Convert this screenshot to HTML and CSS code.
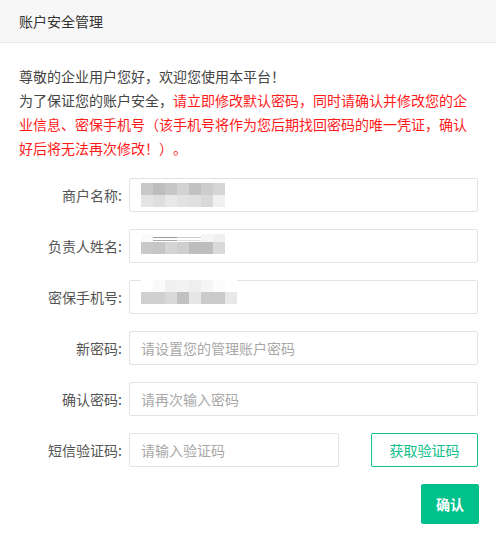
FILE: index.html
```html
<!DOCTYPE html>
<html lang="zh-CN">
<head>
<meta charset="utf-8">
<title>账户安全管理</title>
<link rel="stylesheet" href="styles.css">
</head>
<body>
<div class="panel">
  <div class="panel-header">账户安全管理</div>
  <div class="panel-body">
    <div class="intro">
      <p>尊敬的企业用户您好，欢迎您使用本平台！</p>
      <p>为了保证您的账户安全，<span class="warn">请立即修改默认密码，同时请确认并修改您的企业信息、密保手机号（该手机号将作为您后期找回密码的唯一凭证，确认好后将无法再次修改！）。</span></p>
    </div>
    <div class="form">
      <div class="row">
        <label class="label">商户名称:</label>
        <div class="field masked">
          <div class="mosaic">
            <div class="mrow">
              <i class="g200"></i><i class="g189"></i><i class="g198"></i><i class="g210"></i><i class="g193"></i><i class="g205"></i><i class="g214"></i>
            </div>
            <div class="mrow">
              <i class="g228"></i><i class="g222"></i><i class="g232"></i><i class="g226"></i><i class="g223"></i><i class="g216"></i><i class="g240"></i>
            </div>
          </div>
        </div>
      </div>
      <div class="row">
        <label class="label">负责人姓名:</label>
        <div class="field masked">
          <div class="mosaic shift">
            <div class="mrow frag">
              <i class="g250"></i><i class="dk"></i><i class="dk"></i><i class="dk2"></i><i class="dk2"></i><i class="g245"></i><i class="g240"></i>
            </div>
            <div class="mrow">
              <i class="g201"></i><i class="g198"></i><i class="g212"></i><i class="g207"></i><i class="g189"></i><i class="g189"></i><i class="g217"></i>
            </div>
          </div>
        </div>
      </div>
      <div class="row">
        <label class="label">密保手机号:</label>
        <div class="field masked">
          <div class="mosaic shift2">
            <div class="mrow">
              <i class="g255"></i><i class="g250"></i><i class="g240"></i><i class="g242"></i><i class="g238"></i><i class="g245"></i><i class="g252"></i><i class="g255"></i>
            </div>
            <div class="mrow">
              <i class="g208"></i><i class="g208"></i><i class="g217"></i><i class="g193"></i><i class="g230"></i><i class="g202"></i><i class="g202"></i><i class="g232"></i>
            </div>
          </div>
        </div>
      </div>
      <div class="row">
        <label class="label" for="pwd">新密码:</label>
        <input class="field" id="pwd" type="text" placeholder="请设置您的管理账户密码">
      </div>
      <div class="row">
        <label class="label" for="pwd2">确认密码:</label>
        <input class="field" id="pwd2" type="text" placeholder="请再次输入密码">
      </div>
      <div class="row">
        <label class="label" for="sms">短信验证码:</label>
        <input class="field short" id="sms" type="text" placeholder="请输入验证码">
        <button class="btn-outline" type="button">获取验证码</button>
      </div>
      <div class="actions">
        <button class="btn-primary" type="button">确认</button>
      </div>
    </div>
  </div>
</div>
</body>
</html>
```

FILE: styles.css
```css
* { box-sizing: border-box; }
html, body { margin: 0; padding: 0; background: #fff; }
body {
  font-family: "Noto Sans CJK SC", "Noto Sans", sans-serif;
  font-size: 14px;
  color: #444;
  text-spacing-trim: space-all;
}
.panel { width: 496px; }
.panel-header {
  height: 43px;
  line-height: 42px;
  padding-left: 19px;
  background: #f7f7f7;
  border-bottom: 1px solid #ebebeb;
  color: #333;
  font-size: 14px;
}
.panel-body { padding: 21px 18px 0 19px; }
.intro p { margin: 0; line-height: 24px; color: #444; }
.intro .warn { color: #ff1a1a; }
.form {
  margin-top: 18px;
  display: flex;
  flex-direction: column;
  gap: 17px;
}
.row { display: flex; align-items: center; height: 34px; }
.label {
  width: 110px;
  flex: none;
  padding-right: 7px;
  text-align: right;
  color: #555;
  font-size: 14px;
}
.field {
  flex: 1;
  height: 34px;
  border: 1px solid #e3e3e3;
  border-radius: 2px;
  padding: 0 11px;
  font-family: inherit;
  font-size: 14px;
  color: #333;
  background: #fff;
  outline: none;
  margin: 0;
}
.field::placeholder { color: #a8a8a8; }
.field.short { flex: none; width: 210px; }
.masked { display: flex; align-items: center; }
.mosaic { display: flex; flex-direction: column; }
.mosaic.shift { margin-top: -8px; }
.mosaic.shift2 { margin-top: -10px; }
.mrow { display: flex; }
.mrow i { display: block; width: 12px; height: 12px; }
.mrow.frag i { height: 8px; margin-top: 4px; }
.g189 { background: #bdbdbd; }
.g193 { background: #c1c1c1; }
.g198 { background: #c6c6c6; }
.g200 { background: #c8c8c8; }
.g201 { background: #c9c9c9; }
.g202 { background: #cacaca; }
.g205 { background: #cdcdcd; }
.g207 { background: #cfcfcf; }
.g208 { background: #d0d0d0; }
.g210 { background: #d2d2d2; }
.g212 { background: #d4d4d4; }
.g214 { background: #d6d6d6; }
.g216 { background: #d8d8d8; }
.g217 { background: #d9d9d9; }
.g222 { background: #dedede; }
.g223 { background: #dfdfdf; }
.g226 { background: #e2e2e2; }
.g228 { background: #e4e4e4; }
.g230 { background: #e6e6e6; }
.g232 { background: #e8e8e8; }
.g238 { background: #eeeeee; }
.g240 { background: #f0f0f0; }
.g242 { background: #f2f2f2; }
.g245 { background: #f5f5f5; }
.g250 { background: #fafafa; }
.g252 { background: #fcfcfc; }
.g255 { background: #ffffff; }
.dk { background: linear-gradient(to bottom, #fff 0, #fff 40%, #999 40%, #999 52%, #fff 52%, #fff 75%, #aaa 75%, #aaa 87%, #fff 87%); }
.dk2 { background: linear-gradient(to bottom, #fff 0, #fff 40%, #ccc 40%, #ccc 52%, #fff 52%, #fff 75%, #ddd 75%, #ddd 87%, #fff 87%); }
.btn-outline {
  margin-left: 32px;
  width: 108px;
  height: 34px;
  border: 1px solid #10c08c;
  border-radius: 2px;
  background: #fff;
  color: #10c08c;
  font-family: inherit;
  font-size: 14px;
  padding: 0;
  cursor: pointer;
}
.actions { display: flex; justify-content: flex-end; margin-right: -1px; }
.btn-primary {
  width: 58px;
  height: 40px;
  border: none;
  border-radius: 2px;
  background: #00c08b;
  color: #fff;
  font-family: inherit;
  font-size: 14px;
  font-weight: bold;
  padding: 0;
  cursor: pointer;
}
```
